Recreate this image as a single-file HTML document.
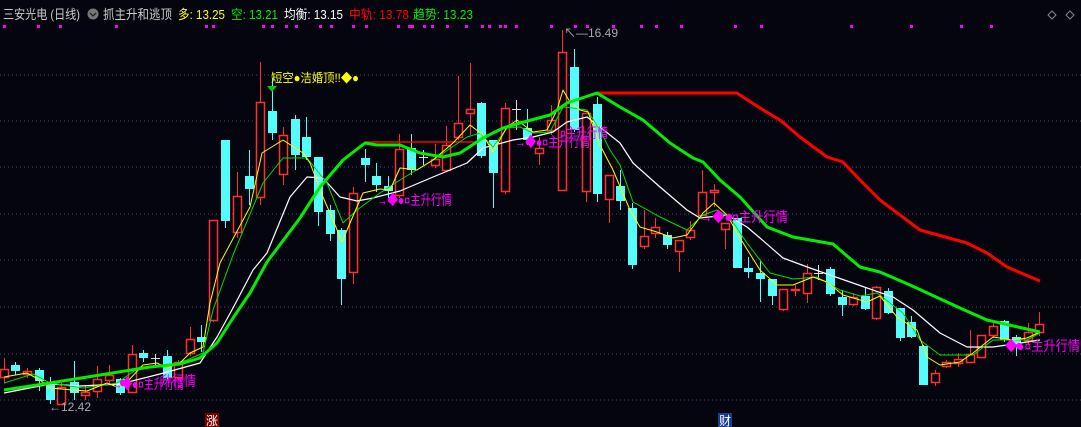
<!DOCTYPE html>
<html><head><meta charset="utf-8"><style>
html,body{margin:0;padding:0;background:#05050f;width:1081px;height:427px;overflow:hidden}
svg{display:block}
text{font-family:"Liberation Sans","Noto Sans CJK SC",sans-serif}
</style></head><body>
<svg id="s" width="1081" height="427" xmlns="http://www.w3.org/2000/svg">
<rect width="1081" height="427" fill="#05050f"/>
<g stroke="#4a4a55" stroke-dasharray="1,3" stroke-width="1">
<line x1="0" y1="75" x2="1081" y2="75"/><line x1="0" y1="121" x2="1081" y2="121"/>
<line x1="0" y1="167" x2="1081" y2="167"/><line x1="0" y1="214" x2="1081" y2="214"/>
<line x1="0" y1="260" x2="1081" y2="260"/><line x1="0" y1="307" x2="1081" y2="307"/>
<line x1="0" y1="354" x2="1081" y2="354"/><line x1="0" y1="400" x2="1081" y2="400"/>
</g>
<g id="dots" fill="#ff00ff"></g>
<g id="candles"></g>
<g fill="none" stroke-linejoin="round">
<polyline stroke="#ff0000" stroke-width="1.5" points="365,142 477,142"/>
<polyline stroke="#ff0000" stroke-width="3" points="597,93 737,93 760,108 780,120 800,137 827,157 843,162 860,180 880,200 920,230 967,243 987,253 1007,267 1040,281"/>
<polyline stroke="#ffffff" stroke-width="1.2" points="4,393 50,384 80,386 120,384 160,374 200,363 217,337 233,308 253,270 267,253 290,197 307,177 323,178 340,197 357,201 373,198 400,191 433,177 467,163 483,148 513,140 533,137 553,132 567,122 587,117 600,127 620,143 633,163 660,187 687,210 700,218 727,215 747,227 760,238 783,258 810,268 850,282 893,297 913,310 940,333 967,347 993,347 1027,342 1040,340"/>
<polyline stroke="#00dd00" stroke-width="1" points="4,383 33,374 50,383 83,388 117,383 140,367 163,367 187,360 203,353 213,310 233,255 263,183 283,158 307,158 327,183 343,223 357,210 380,193 400,180 433,160 467,137 480,133 493,147 507,128 520,127 533,133 550,132 563,107 573,108 587,110 600,130 610,150 620,165 633,202 660,217 687,230 703,215 717,210 730,218 747,243 770,273 793,279 817,277 840,290 860,296 877,293 903,313 920,340 940,355 973,355 993,340 1027,340 1040,333"/>
<polyline stroke="#ffff00" stroke-width="1" points="4,377 27,373 40,380 50,388 73,390 87,391 107,383 117,387 127,382 143,365 157,363 167,368 180,363 190,353 203,347 210,303 220,263 250,207 262,153 283,140 303,153 310,163 323,197 333,220 342,242 350,223 363,193 380,189 390,190 400,168 417,170 433,160 453,143 470,125 483,135 493,152 507,127 517,120 533,132 547,130 557,110 563,90 570,102 580,110 588,112 600,145 613,170 630,210 640,227 657,232 673,238 687,235 703,213 714,203 727,215 740,238 760,270 777,285 793,285 813,277 827,282 843,295 867,302 880,296 897,317 917,330 927,357 940,365 960,362 973,353 993,337 1013,340 1027,338 1040,332"/>
<polyline stroke="#00ee00" stroke-width="3" points="4,390 50,383 100,375 150,367 180,364 200,358 217,343 233,318 250,293 267,262 300,218 320,187 343,160 365,143 377,145 400,145 420,153 443,157 460,153 483,138 503,128 520,123 550,115 567,103 597,93 620,107 643,120 670,143 693,158 703,162 720,180 740,197 767,227 793,237 833,244 860,267 880,272 910,285 960,308 987,320 1040,332"/>
</g>
<g font-size="14" fill="#ff00ff">
<text x="377" y="205" textLength="75" lengthAdjust="spacingAndGlyphs">→◆●¤主升行情</text>
<text x="515" y="147" textLength="75" lengthAdjust="spacingAndGlyphs">→◆●¤主升行情</text>
<text x="560" y="138" textLength="48" lengthAdjust="spacingAndGlyphs">¤主升行情</text>
<text x="112" y="389" textLength="72" lengthAdjust="spacingAndGlyphs">→◆●¤主升行情</text>
<text x="160" y="386" textLength="36" lengthAdjust="spacingAndGlyphs">升行情</text>
<text x="700" y="222" textLength="88" lengthAdjust="spacingAndGlyphs">→◆●¤主升行情</text>
<text x="1005" y="351" textLength="75" lengthAdjust="spacingAndGlyphs">◆●¤主升行情</text>
</g>
<circle cx="391" cy="200" r="3.2" fill="#ff00ff"/><circle cx="529" cy="142" r="3.2" fill="#ff00ff"/>
<circle cx="123" cy="383" r="3.2" fill="#ff00ff"/><circle cx="729" cy="217" r="3.2" fill="#ff00ff"/><circle cx="1019" cy="346" r="3.2" fill="#ff00ff"/>
<text x="271" y="82" font-size="12" fill="#ffff00" textLength="88" lengthAdjust="spacingAndGlyphs">短空●洁婚顶!!◆●</text>
<polygon points="267,86 277,86 272,92" fill="#00cc00"/>
<text x="564" y="37" font-size="12" fill="#aaaaaa">↖—16.49</text>
<text x="49" y="411" font-size="12" fill="#aaaaaa">←12.42</text>
<rect x="205" y="413" width="14" height="14" fill="#7a0000"/>
<text x="206" y="425" font-size="12" fill="#ffffff">涨</text>
<rect x="718" y="413" width="14" height="14" fill="#1a3a8a"/>
<text x="719" y="425" font-size="12" fill="#ffffff">财</text>
<g font-size="13">
<text x="3" y="19" fill="#cccccc" textLength="77" lengthAdjust="spacingAndGlyphs">三安光电 (日线)</text>
<circle cx="93" cy="14" r="5.5" fill="#777"/><path d="M90,13 L93,16 L96,13" stroke="#222" fill="none" stroke-width="1.3"/>
<text x="103" y="19" fill="#cccccc" textLength="69" lengthAdjust="spacingAndGlyphs">抓主升和逃顶</text>
<text x="178" y="19" fill="#ffff00" textLength="47" lengthAdjust="spacingAndGlyphs">多: 13.25</text>
<text x="231" y="19" fill="#00ee00" textLength="47" lengthAdjust="spacingAndGlyphs">空: 13.21</text>
<text x="284" y="19" fill="#ffffff" textLength="59" lengthAdjust="spacingAndGlyphs">均衡: 13.15</text>
<text x="349" y="19" fill="#ff0000" textLength="60" lengthAdjust="spacingAndGlyphs">中轨: 13.78</text>
<text x="413" y="19" fill="#00ee00" textLength="60" lengthAdjust="spacingAndGlyphs">趋势: 13.23</text>
</g>
<path d="M1052,11 L1056,15 L1052,19 L1048,15 Z" fill="none" stroke="#888"/>
<path d="M1070,11 L1074,15 L1070,19 L1066,15 Z" fill="none" stroke="#888"/>
</svg>
<script>
var d=[
[4,369,377,358,383,'r'],[15,365,371,362,375,'c'],[27,371,374,368,378,'r'],[39,370,381,368,391,'c'],[50,382,400,377,404,'c'],[61,387,404,383,404,'r'],[74,382,393,361,400,'c'],[85,392,395,385,400,'r'],[97,379,391,366,398,'r'],[109,375,380,365,385,'r'],[120,379,393,378,395,'c'],[132,354,392,345,392,'r'],[143,353,358,350,362,'c'],[155,358,358,354,365,'w'],[167,356,378,350,380,'c'],[178,362,377,360,380,'r'],[190,339,353,327,356,'r'],[201,337,342,325,352,'c'],[213,220,320,220,322,'r'],[225,140,221,140,228,'c'],[237,196,232,172,238,'r'],[249,176,189,150,205,'c'],[260,102,197,62,205,'r'],[272,111,133,78,140,'c'],[283,135,174,127,185,'r'],[295,119,155,115,170,'c'],[306,137,157,117,160,'c'],[318,157,212,157,226,'c'],[330,210,234,205,241,'c'],[341,230,279,228,305,'c'],[353,193,272,187,284,'r'],[365,158,165,149,182,'c'],[376,176,185,163,192,'c'],[388,186,191,176,198,'c'],[399,149,195,134,198,'r'],[411,148,170,134,175,'c'],[423,157,157,150,165,'w'],[435,159,165,144,168,'r'],[446,145,170,126,172,'r'],[458,123,137,76,140,'r'],[470,109,113,63,135,'r'],[481,103,156,102,158,'c'],[493,140,173,140,208,'c'],[505,108,191,103,194,'r'],[516,109,109,100,130,'w'],[527,128,140,109,145,'c'],[539,148,153,137,165,'r'],[551,120,130,105,135,'r'],[562,52,190,30,190,'r'],[574,67,130,49,132,'c'],[586,113,191,113,202,'r'],[597,104,194,97,202,'c'],[609,175,199,175,223,'r'],[620,186,201,170,210,'c'],[632,208,265,203,269,'c'],[644,236,246,210,249,'r'],[655,227,233,218,238,'r'],[667,235,245,232,249,'c'],[679,240,251,240,272,'r'],[690,230,237,221,240,'r'],[702,192,215,170,215,'r'],[714,190,192,184,207,'r'],[725,223,229,223,249,'r'],[737,218,268,218,268,'c'],[748,268,272,257,278,'c'],[760,273,279,261,302,'c'],[772,279,296,279,305,'c'],[783,289,309,289,311,'r'],[795,289,290,285,296,'r'],[807,273,293,264,303,'r'],[818,273,273,265,280,'w'],[830,269,294,267,296,'c'],[842,297,305,290,316,'c'],[853,297,304,293,306,'r'],[865,296,309,288,310,'c'],[876,287,318,286,320,'r'],[888,291,313,288,314,'c'],[900,308,338,308,341,'c'],[911,322,337,316,338,'c'],[923,346,385,345,385,'c'],[935,373,382,370,386,'r'],[946,362,366,360,368,'r'],[958,359,363,353,367,'r'],[970,354,362,330,362,'r'],[981,335,357,335,357,'r'],[993,326,335,322,338,'r'],[1004,321,340,320,342,'c'],[1016,337,343,335,356,'c'],[1028,332,340,323,345,'r'],[1039,324,332,312,336,'r']];
var g=document.getElementById('candles'),h='';
d.forEach(function(c){var x=c[0],t=c[1],b=c[2],hi=c[3],lo=c[4],k=c[5];
var col=k=='r'?'#ff3030':(k=='c'?'#54fcfc':'#dddddd');
if(k=='r'){h+='<line x1="'+(x+.5)+'" y1="'+hi+'" x2="'+(x+.5)+'" y2="'+t+'" stroke="'+col+'"/><line x1="'+(x+.5)+'" y1="'+b+'" x2="'+(x+.5)+'" y2="'+lo+'" stroke="'+col+'"/>';}
else h+='<line x1="'+(x+.5)+'" y1="'+hi+'" x2="'+(x+.5)+'" y2="'+lo+'" stroke="'+col+'" stroke-width="1"/>';
if(k=='w'){h+='<line x1="'+(x-4)+'" y1="'+(t+.5)+'" x2="'+(x+5)+'" y2="'+(t+.5)+'" stroke="'+col+'"/>';}
else if(k=='r'){h+='<rect x="'+(x-3.5)+'" y="'+(t+.5)+'" width="8" height="'+Math.max(b-t,1)+'" fill="#05050f" stroke="'+col+'" stroke-width="1.5"/>';}
else{h+='<rect x="'+(x-4)+'" y="'+t+'" width="9" height="'+Math.max(b-t,1)+'" fill="'+col+'"/>';}
});
g.innerHTML=h;
var dx=[3,37,59,115,205,212,262,271,285,295,319,330,352,365,397,408,411,423,431,446,465,481,488,499,504,515,550,574,586,612,640,655,680,734,760,850,910,960,990],dh='';
dx.forEach(function(x){dh+='<rect x="'+x+'" y="25" width="3" height="3"/>';});
document.getElementById('dots').innerHTML=dh;
</script>
</body></html>
